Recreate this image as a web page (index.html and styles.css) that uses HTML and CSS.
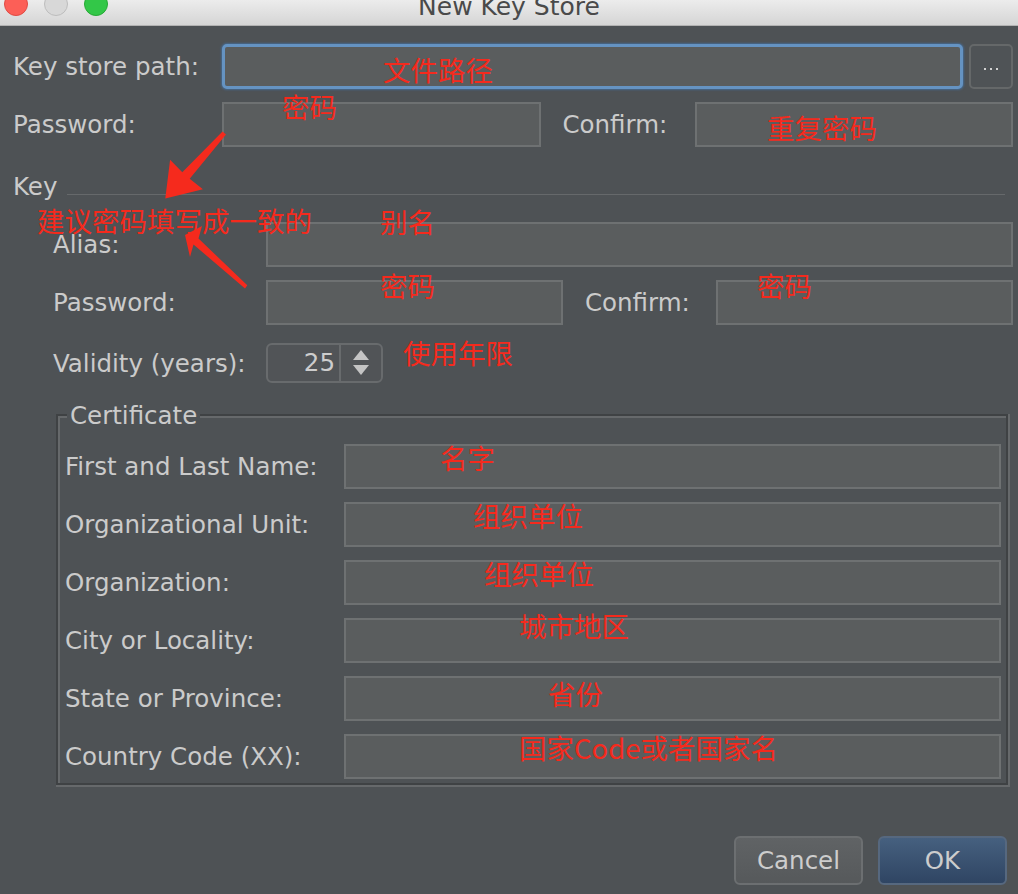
FILE: index.html
```html
<!DOCTYPE html>
<html>
<head>
<meta charset="utf-8">
<title>New Key Store</title>
<link rel="stylesheet" href="styles.css">
</head>
<body>
<div class="window">
  <div class="titlebar">
    <div class="lights">
      <span class="light red"></span>
      <span class="light gray"></span>
      <span class="light green"></span>
    </div>
    <div class="title">New Key Store</div>
    <div></div>
  </div>

  <div class="content">
    <div class="row">
      <div class="label w209">Key store path:</div>
      <div class="field focused grow"></div>
      <div class="browse"><span class="dot"></span><span class="dot"></span><span class="dot"></span></div>
    </div>
    <div class="row gap13">
      <div class="label w209">Password:</div>
      <div class="field grow"></div>
      <div class="label confirm">Confirm:</div>
      <div class="field grow"></div>
    </div>

    <div class="sep">
      <span class="sep-label">Key</span>
      <span class="sep-line"></span>
    </div>

    <div class="key">
      <div class="row">
        <div class="label w213">Alias:</div>
        <div class="field grow"></div>
      </div>
      <div class="row gap13">
        <div class="label w213">Password:</div>
        <div class="field grow"></div>
        <div class="label confirm2">Confirm:</div>
        <div class="field grow"></div>
      </div>
      <div class="row gap18 short">
        <div class="label w213">Validity (years):</div>
        <div class="spinner">
          <div class="spin-val">25</div>
          <div class="spin-arrows">
            <svg width="18" height="28" viewBox="0 0 18 28">
              <polygon points="9,1 17,11 1,11" fill="#c4c4c4"/>
              <polygon points="1,16 17,16 9,26" fill="#c4c4c4"/>
            </svg>
          </div>
        </div>
      </div>
    </div>

    <div class="cert">
      <div class="cert-inner">
        <div class="legend">Certificate</div>
        <div class="cert-rows">
          <div class="label">First and Last Name:</div><div class="field"></div>
          <div class="label">Organizational Unit:</div><div class="field"></div>
          <div class="label">Organization:</div><div class="field"></div>
          <div class="label">City or Locality:</div><div class="field"></div>
          <div class="label">State or Province:</div><div class="field"></div>
          <div class="label">Country Code (XX):</div><div class="field"></div>
        </div>
      </div>
    </div>

    <div class="buttons">
      <div class="btn cancel">Cancel</div>
      <div class="btn ok">OK</div>
    </div>
  </div>

  <div class="notes">
    <svg class="arrows" width="1018" height="894" viewBox="0 0 1018 894">
      <polygon fill="#f52a1d" points="222.5,131.5 226,134.5 189.7,178.8 202.9,189.2 165.3,198.6 170.1,159.8 182.3,172.2"/>
      <polygon fill="#f52a1d" points="247.3,285.3 198.5,238.5 202,226 185,235 190,257 193.5,244.5 245,288.5"/>
    </svg>
    <span class="note n1">文件路径</span>
    <span class="note n2">密码</span>
    <span class="note n3">重复密码</span>
    <span class="note n4">建议密码填写成一致的</span>
    <span class="note n5">别名</span>
    <span class="note n6">密码</span>
    <span class="note n7">密码</span>
    <span class="note n8">使用年限</span>
    <span class="note n9">名字</span>
    <span class="note n10">组织单位</span>
    <span class="note n11">组织单位</span>
    <span class="note n12">城市地区</span>
    <span class="note n13">省份</span>
    <span class="note n14">国家Code或者国家名</span>
  </div>
</div>
</body>
</html>
```

FILE: styles.css
```css
html, body {
  margin: 0;
  padding: 0;
  background: #4e5255;
}

.window {
  position: relative;
  width: 1018px;
  height: 894px;
  overflow: hidden;
  background: #4e5255;
  font-family: "DejaVu Sans", "Noto Sans CJK SC", sans-serif;
  font-size: 24.5px;
  color: #cbcbcb;
}

/* title bar */
.titlebar {
  height: 25px;
  border-bottom: 1px solid #b2b2b2;
  background: linear-gradient(#ececec, #d5d5d5);
  display: grid;
  grid-template-columns: 120px 1fr 120px;
  overflow: hidden;
}

.lights {
  display: flex;
  align-items: flex-start;
  gap: 16px;
  padding-left: 4px;
  margin-top: -8px;
}

.light {
  width: 24px;
  height: 24px;
  border-radius: 50%;
  box-sizing: border-box;
  border: 1px solid;
}

.light.red { background: #fc5f57; border-color: #df4b44; }
.light.gray { background: #d8d8d8; border-color: #bdbdbd; }
.light.green { background: #33c748; border-color: #27a936; }

.title {
  text-align: center;
  font-size: 25px;
  line-height: 25px;
  margin-top: -6px;
  color: #4a4a4a;
  white-space: nowrap;
}

/* content */
.content {
  padding: 18px 5px 0 13px;
}

.row {
  display: flex;
  align-items: center;
  height: 45px;
}

.row.short { height: 40px; }
.gap13 { margin-top: 13px; }
.gap18 { margin-top: 18px; }

.label {
  white-space: nowrap;
  box-sizing: border-box;
}

.w209 { width: 209px; flex: none; }
.w213 { width: 213px; flex: none; }

.confirm {
  width: 154px;
  flex: none;
  padding-left: 22px;
}

.confirm2 {
  width: 153px;
  flex: none;
  padding-left: 22px;
}

.grow { flex: 1 1 0; min-width: 0; }

.field {
  box-sizing: border-box;
  height: 45px;
  background: #5a5d5e;
  border: 2px solid #6e7172;
}

.field.focused {
  border: 3px solid #6593c2;
  border-radius: 5px;
  box-shadow: 0 0 2px 1px #46698f;
}

.browse {
  flex: none;
  width: 44px;
  height: 45px;
  margin-left: 6px;
  box-sizing: border-box;
  border: 2px solid #656869;
  border-radius: 5px;
  background: #4f5356;
  display: flex;
  align-items: center;
  justify-content: center;
  gap: 4px;
  padding-top: 4px;
}

.dot {
  width: 2px;
  height: 2px;
  background: #d2d2d2;
}

/* key separator */
.sep {
  display: flex;
  align-items: flex-start;
  margin-top: 28px;
  height: 24px;
}

.sep-label {
  line-height: 24px;
}

.sep-line {
  flex: 1;
  height: 1px;
  background: #66696b;
  margin: 19px 8px 0 10px;
}

.key {
  margin-top: 23px;
  padding-left: 40px;
}

/* spinner */
.spinner {
  width: 117px;
  height: 40px;
  box-sizing: border-box;
  border: 2px solid #686b6d;
  border-radius: 6px;
  background: #515457;
  display: flex;
}

.spin-val {
  width: 73px;
  box-sizing: border-box;
  border-right: 2px solid #686b6d;
  text-align: right;
  padding-right: 4px;
  line-height: 36px;
  color: #cdcdcd;
}

.spin-arrows {
  flex: 1;
  display: flex;
  align-items: center;
  justify-content: center;
}

.spin-arrows svg { display: block; }

/* certificate */
.cert {
  margin-top: 31px;
  margin-left: 43px;
  width: 954px;
  box-sizing: border-box;
  border-right: 2px solid #66696b;
  border-bottom: 2px solid #66696b;
}

.cert-inner {
  border: 2px solid #3f4244;
  box-shadow: inset 2px 2px 0 #66696b;
  padding: 0 5px 4px 7px;
}

.legend {
  display: table;
  margin: -14px 0 0 2px;
  padding: 0 3px;
  line-height: 28px;
  background: #4e5255;
}

.cert-rows {
  margin-top: 14px;
  display: grid;
  grid-template-columns: 279px 1fr;
  grid-auto-rows: 45px;
  row-gap: 13px;
  align-items: center;
}

/* buttons */
.buttons {
  display: flex;
  justify-content: flex-end;
  gap: 15px;
  margin-top: 49px;
  margin-right: 6px;
}

.btn {
  width: 129px;
  height: 49px;
  box-sizing: border-box;
  border-radius: 6px;
  border: 2px solid;
  display: flex;
  align-items: center;
  justify-content: center;
  color: #cdcdcd;
}

.btn.cancel {
  background: linear-gradient(#606365, #56595b);
  border-color: #6c6f71;
}

.btn.ok {
  background: linear-gradient(#46607f, #2f4563);
  border-color: #56687f;
}

/* annotations */
.notes {
  position: absolute;
  left: 0;
  top: 0;
  width: 1018px;
  height: 894px;
  pointer-events: none;
}

.arrows {
  position: absolute;
  left: 0;
  top: 0;
}

.note {
  position: absolute;
  font-family: "Noto Sans CJK SC", sans-serif;
  font-size: 27.5px;
  line-height: 1;
  color: #f52a1d;
  white-space: nowrap;
}

.n1 { left: 383px; top: 56px; }
.n2 { left: 282px; top: 93px; }
.n3 { left: 767px; top: 114px; }
.n4 { left: 37px; top: 207px; }
.n5 { left: 380px; top: 208px; }
.n6 { left: 380px; top: 272px; }
.n7 { left: 757px; top: 272px; }
.n8 { left: 403px; top: 339px; }
.n9 { left: 440px; top: 444px; }
.n10 { left: 473px; top: 502px; }
.n11 { left: 484px; top: 560px; }
.n12 { left: 519px; top: 612px; }
.n13 { left: 548px; top: 680px; }
.n14 { left: 519px; top: 734px; }
```
